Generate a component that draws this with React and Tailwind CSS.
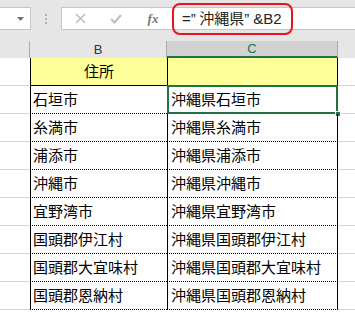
const rows = [
  ['石垣市', '沖縄県石垣市'],
  ['糸満市', '沖縄県糸満市'],
  ['浦添市', '沖縄県浦添市'],
  ['沖縄市', '沖縄県沖縄市'],
  ['宜野湾市', '沖縄県宜野湾市'],
  ['国頭郡伊江村', '沖縄県国頭郡伊江村'],
  ['国頭郡大宜味村', '沖縄県国頭郡大宜味村'],
  ['国頭郡恩納村', '沖縄県国頭郡恩納村'],
]

const cellFont = { fontFamily: '"MS PGothic", "Noto Sans CJK JP", sans-serif' }

export default function App() {
  return (
    <div className="w-[355px] h-[317px] overflow-hidden bg-white text-black" style={cellFont}>
      {/* formula bar */}
      <div className="relative h-[41px] bg-[#e6e6e6] flex items-start pt-[7px]">
        <div className="w-[31px] h-[23px] bg-white border border-l-0 border-[#c6c6c6] flex items-center justify-end pr-[6px]">
          <svg width="7" height="4" viewBox="0 0 7 4"><path d="M0 0h7L3.5 4z" fill="#707070" /></svg>
        </div>
        <div className="w-[30px] h-[23px] flex flex-col items-center justify-center gap-[2px]">
          <span className="w-[2px] h-[2px] bg-[#b0b0b0]" />
          <span className="w-[2px] h-[2px] bg-[#b0b0b0]" />
          <span className="w-[2px] h-[2px] bg-[#b0b0b0]" />
        </div>
        <div className="flex-1 h-[23px] bg-white border border-r-0 border-[#c6c6c6] flex items-center">
          <div className="w-[36px] flex justify-center">
            <svg width="11" height="11" viewBox="0 0 11 11"><path d="M1 1l9 9M10 1l-9 9" stroke="#bdbdbd" strokeWidth="1.6" /></svg>
          </div>
          <div className="w-[36px] flex justify-center">
            <svg width="12" height="10" viewBox="0 0 12 10"><path d="M1 5l3.5 3.5L11 1" stroke="#bdbdbd" strokeWidth="2" fill="none" /></svg>
          </div>
          <div className="w-[38px] flex justify-center">
            <span className="italic text-[13px] font-bold text-[#777]" style={{ fontFamily: '"Liberation Serif", serif' }}>fx</span>
          </div>
          <div className="pl-[10px] text-[15px] text-[#222] whitespace-nowrap">
            <span style={{ fontFamily: '"Liberation Sans", "Noto Sans CJK JP", sans-serif' }}>=”</span>
            <span> 沖縄県</span>
            <span style={{ fontFamily: '"Liberation Sans", "Noto Sans CJK JP", sans-serif' }}>” &amp;B2</span>
          </div>
        </div>
        <div className="absolute left-[172px] top-[3px] w-[121px] h-[32px] border-2 border-[#e8141b] rounded-[8px]" />
      </div>

      {/* column headers */}
      <div className="flex h-[17px] text-[13px]" style={{ fontFamily: '"Liberation Sans", Arial, sans-serif' }}>
        <div className="w-[30px] bg-[#e6e6e6] border-r border-[#ababab]" />
        <div className="w-[137px] bg-[#e6e6e6] border-r border-[#ababab] flex items-center justify-center text-[#333]">B</div>
        <div className="w-[171px] bg-[#d2d2d2] border-b-2 border-[#217346] border-r border-r-[#ababab] flex items-center justify-center text-[#217346]">C</div>
        <div className="flex-1 bg-[#e6e6e6]" />
      </div>

      {/* header row */}
      <div className="flex h-[28px]">
        <div className="w-[30px] border-b border-[#d4d4d4]" />
        <div className="w-[137px] bg-[#ffff99] border-l border-b border-black flex items-center justify-center text-[15px]">住所</div>
        <div className="w-[171px] bg-[#ffff99] border-l border-r border-b border-black" />
        <div className="flex-1 border-b border-[#d4d4d4]" />
      </div>

      {rows.map(([b, c], i) => (
        <div key={b} className="flex h-[28px]">
          <div className="w-[30px] border-b border-[#d4d4d4]" />
          <div className="w-[137px] border-l border-b border-black border-b-dotted flex items-center pl-[2px] text-[15px] whitespace-nowrap" style={{ borderBottomStyle: 'dotted' }}>{b}</div>
          <div className="relative w-[171px] border-l border-r border-b border-black flex items-center pl-[3px] text-[15px] whitespace-nowrap" style={{ borderBottomStyle: 'dotted' }}>
            {c}
            {i === 0 && (
              <>
                <div className="absolute -left-[1px] -top-[1px] -right-[1px] -bottom-[1px] border-2 border-[#217346]" />
                <div className="absolute -right-[4px] -bottom-[4px] w-[6px] h-[6px] bg-[#217346] border border-white" />
              </>
            )}
          </div>
          <div className="flex-1 border-b border-[#d4d4d4]" />
        </div>
      ))}
    </div>
  )
}
